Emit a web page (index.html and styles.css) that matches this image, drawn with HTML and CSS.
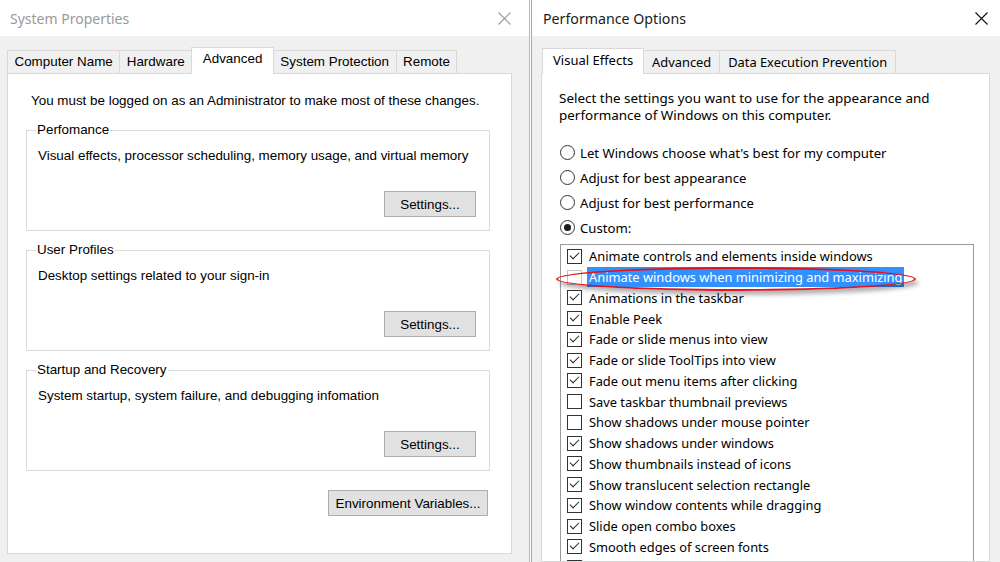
FILE: index.html
```html
<!DOCTYPE html>
<html lang="en">
<head>
  <meta charset="UTF-8">
  <title>System Properties - Performance Options</title>
  <link rel="stylesheet" href="styles.css">
</head>
<body>
  <div class="desktop">
    <section class="window system-props">
      <div class="titlebar">
        <span class="title">System Properties</span>
        <svg class="close" viewBox="0 0 13 13"><path d="M0.5 0.5L12.5 12.5M12.5 0.5L0.5 12.5"/></svg>
      </div>
      <div class="window-body">
        <div class="tabs">
          <span class="tab">Computer Name</span>
          <span class="tab">Hardware</span>
          <span class="tab active">Advanced</span>
          <span class="tab">System Protection</span>
          <span class="tab">Remote</span>
        </div>
        <div class="panel">
          <p class="note">You must be logged on as an Administrator to make most of these changes.</p>

          <fieldset class="group">
            <legend>Perfomance</legend>
            <p>Visual effects, processor scheduling, memory usage, and virtual memory</p>
            <div class="actions"><button class="btn">Settings...</button></div>
          </fieldset>

          <fieldset class="group">
            <legend>User Profiles</legend>
            <p>Desktop settings related to your sign-in</p>
            <div class="actions"><button class="btn">Settings...</button></div>
          </fieldset>

          <fieldset class="group">
            <legend>Startup and Recovery</legend>
            <p>System startup, system failure, and debugging infomation</p>
            <div class="actions"><button class="btn">Settings...</button></div>
          </fieldset>

          <div class="env-row"><button class="btn wide">Environment Variables...</button></div>
        </div>
      </div>
    </section>

    <section class="window perf-options">
      <div class="titlebar">
        <span class="title">Performance Options</span>
        <svg class="close" viewBox="0 0 13 13"><path d="M0.5 0.5L12.5 12.5M12.5 0.5L0.5 12.5"/></svg>
      </div>
      <div class="window-body">
        <div class="tabs">
          <span class="tab active">Visual Effects</span>
          <span class="tab">Advanced</span>
          <span class="tab">Data Execution Prevention</span>
        </div>
        <div class="panel">
          <p class="intro">Select the settings you want to use for the appearance and performance of Windows on this computer.</p>

          <div class="radios">
            <label class="radio-row"><span class="radio"></span>Let Windows choose what's best for my computer</label>
            <label class="radio-row"><span class="radio"></span>Adjust for best appearance</label>
            <label class="radio-row"><span class="radio"></span>Adjust for best performance</label>
            <label class="radio-row"><span class="radio on"></span>Custom:</label>
          </div>

          <div class="listbox">
            <div class="item"><span class="box on"></span><span class="item-text">Animate controls and elements inside windows</span></div>
            <div class="item"><span class="box faded"></span><span class="item-text selected">Animate windows when minimizing and maximizing</span><span class="mark"></span></div>
            <div class="item"><span class="box on"></span><span class="item-text">Animations in the taskbar</span></div>
            <div class="item"><span class="box on"></span><span class="item-text">Enable Peek</span></div>
            <div class="item"><span class="box on"></span><span class="item-text">Fade or slide menus into view</span></div>
            <div class="item"><span class="box on"></span><span class="item-text">Fade or slide ToolTips into view</span></div>
            <div class="item"><span class="box on"></span><span class="item-text">Fade out menu items after clicking</span></div>
            <div class="item"><span class="box"></span><span class="item-text">Save taskbar thumbnail previews</span></div>
            <div class="item"><span class="box"></span><span class="item-text">Show shadows under mouse pointer</span></div>
            <div class="item"><span class="box on"></span><span class="item-text">Show shadows under windows</span></div>
            <div class="item"><span class="box on"></span><span class="item-text">Show thumbnails instead of icons</span></div>
            <div class="item"><span class="box on"></span><span class="item-text">Show translucent selection rectangle</span></div>
            <div class="item"><span class="box on"></span><span class="item-text">Show window contents while dragging</span></div>
            <div class="item"><span class="box on"></span><span class="item-text">Slide open combo boxes</span></div>
            <div class="item"><span class="box on"></span><span class="item-text">Smooth edges of screen fonts</span></div>
            <div class="item"><span class="box on"></span><span class="item-text">Smooth-scroll list boxes</span></div>
            <div class="item"><span class="box on"></span><span class="item-text">Use drop shadows for icon labels on the desktop</span></div>
          </div>
        </div>
      </div>
    </section>
  </div>
</body>
</html>
```

FILE: styles.css
```css
html, body {
  margin: 0;
  padding: 0;
}

body {
  width: 1000px;
  height: 562px;
  overflow: hidden;
  background: #fff;
  color: #000;
  font-family: "Liberation Sans", Arial, sans-serif;
  font-size: 13.4px;
}

.desktop {
  display: flex;
  height: 562px;
}

.window {
  display: flex;
  flex-direction: column;
  height: 562px;
  overflow: hidden;
  background: #f0f0f0;
  box-sizing: border-box;
}

.system-props {
  width: 530px;
  border-right: 1px solid #b9b9b9;
}

.perf-options {
  flex: 1;
  margin-left: 1px;
  border-left: 1px solid #e1a247;
  font-family: "Noto Sans", "Open Sans", sans-serif;
  font-size: 12.85px;
}

/* title bars */
.titlebar {
  flex: 0 0 36px;
  display: flex;
  align-items: center;
  justify-content: space-between;
  background: #fff;
  font-family: "Noto Sans", "Open Sans", sans-serif;
  font-size: 14.2px;
}

.system-props .titlebar {
  padding: 0 18px 0 10px;
  color: #9a9a9a;
  font-size: 14px;
}

.perf-options .titlebar {
  padding: 0 12px 0 11px;
  color: #1b1b1b;
}

.close {
  width: 13px;
  height: 13px;
  fill: none;
  stroke-width: 1.1;
}

.system-props .close { stroke: #9a9a9a; }
.perf-options .close { stroke: #111; }

/* body + tabs */
.window-body {
  flex: 1;
  display: flex;
  flex-direction: column;
  min-height: 0;
}

.system-props .window-body {
  padding: 11px 17px 8px 7px;
}

.perf-options .window-body {
  padding: 12px 10px 0 9px;
}

.tabs {
  display: flex;
  align-items: flex-end;
  height: 26px;
  margin-left: 1px;
}

.perf-options .tabs {
  height: 25px;
  margin-left: 2px;
}

.tab {
  height: 23px;
  line-height: 22px;
  padding: 0 6.5px;
  margin-left: -1px;
  border: 1px solid #d9d9d9;
  border-bottom: none;
  box-sizing: border-box;
  background: #f0f0f0;
  white-space: nowrap;
}

.tab.active {
  height: 27px;
  line-height: 22px;
  padding: 0 10.5px;
  margin-bottom: -1px;
  background: #fff;
  position: relative;
  z-index: 1;
}

.perf-options .tab {
  padding: 0 8px;
}

.perf-options .tab.active {
  height: 26px;
  padding: 0 10px;
  font-size: 13px;
}

.panel {
  flex: 1;
  background: #fff;
  border: 1px solid #d9d9d9;
  min-height: 0;
  overflow: hidden;
}

/* System Properties panel */
.system-props .panel {
  padding: 19px 21px 0 18px;
}

.note {
  margin: 0 0 13px 5px;
  line-height: 16px;
}

.group {
  margin: 0 0 11px;
  padding: 0 13px 13px 11px;
  border: 1px solid #dcdcdc;
}

.group legend {
  padding: 0 1px;
  margin-left: -2px;
  line-height: 16px;
}

.group p {
  margin: 10px 0 0;
  line-height: 16px;
}

.actions {
  display: flex;
  justify-content: flex-end;
  margin-top: 27px;
}

.btn {
  width: 92px;
  height: 26px;
  padding: 0;
  background: #e1e1e1;
  border: 1px solid #adadad;
  font-family: inherit;
  font-size: 13.4px;
  color: #000;
}

.btn.wide {
  width: 160px;
}

.env-row {
  display: flex;
  justify-content: flex-end;
  margin: 19px 2px 0 0;
}

/* Performance Options panel */
.perf-options .panel {
  padding: 16px 15px 0 17px;
}

.intro {
  margin: 0;
  line-height: 17px;
  width: 400px;
  font-size: 13.45px;
}

.radios {
  margin-top: 16px;
  font-size: 13.15px;
}

.radio-row {
  display: flex;
  align-items: center;
  gap: 5px;
  height: 25px;
  margin-left: 1px;
}

.radio {
  width: 15px;
  height: 15px;
  border: 1px solid #333;
  border-radius: 50%;
  box-sizing: border-box;
  display: flex;
  align-items: center;
  justify-content: center;
}

.radio.on::after {
  content: "";
  width: 7px;
  height: 7px;
  border-radius: 50%;
  background: #1b1b1b;
}

.listbox {
  width: 414px;
  margin: 4px 0 0 1px;
  padding-top: 1px;
  border: 1px solid #9a9a9a;
  box-sizing: border-box;
}

.item {
  display: flex;
  align-items: center;
  height: 20.75px;
  padding-left: 6px;
  position: relative;
}

.box {
  flex: 0 0 15px;
  height: 15px;
  margin-right: 5px;
  border: 1px solid #333;
  box-sizing: border-box;
  position: relative;
}

.box.faded {
  border-color: #c4c4c4;
}

.box.on::after {
  content: "";
  position: absolute;
  left: 2px;
  top: 2px;
  width: 8px;
  height: 4px;
  border-left: 1.3px solid #222;
  border-bottom: 1.3px solid #222;
  transform: rotate(-45deg);
}

.item-text {
  padding: 0 2px;
  line-height: 20px;
  white-space: nowrap;
}

.item-text.selected {
  background: #3390ff;
  color: #fff;
}

/* red highlight ring drawn over the selected row */
.mark {
  position: absolute;
  left: -5px;
  top: 0;
  width: 360px;
  height: 24px;
  border: 2px solid #e3141c;
  border-radius: 50%;
  box-sizing: border-box;
  box-shadow: 3px 4px 4px rgba(0, 0, 0, 0.3);
}
```
